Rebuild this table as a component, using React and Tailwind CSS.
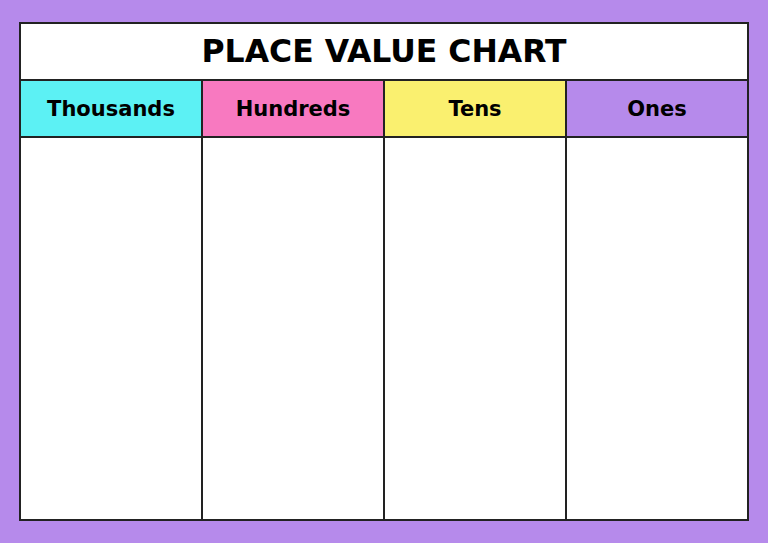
import React from 'react'

const COLUMNS = [
  { label: 'Thousands', bg: 'bg-[#5cf1f4]' },
  { label: 'Hundreds', bg: 'bg-[#f879c0]' },
  { label: 'Tens', bg: 'bg-[#faf06f]' },
  { label: 'Ones', bg: 'bg-[#b68aeb]' }
]

export default function App() {
  return (
    <div
      className="w-[768px] h-[543px] bg-[#b68aeb] px-[19px] py-[22px]"
      style={{ fontFamily: '"DejaVu Sans", "Open Sans", sans-serif' }}
    >
      <div className="h-full flex flex-col bg-white border-2 border-[#222]">
        <div className="h-[57px] flex items-center justify-center border-b-2 border-[#222]">
          <h1 className="text-[31.5px] font-bold text-black leading-none">PLACE VALUE CHART</h1>
        </div>
        <div className="flex h-[57px] border-b-2 border-[#222]">
          {COLUMNS.map((col, i) => (
            <div
              key={col.label}
              className={`flex-1 flex items-center justify-center pt-[2px] ${col.bg} ${i < 3 ? 'border-r-2 border-[#222]' : ''}`}
            >
              <span className="text-[21px] font-bold text-black">{col.label}</span>
            </div>
          ))}
        </div>
        <div className="flex flex-1">
          {COLUMNS.map((col, i) => (
            <div key={col.label} className={`flex-1 ${i < 3 ? 'border-r-2 border-[#222]' : ''}`} />
          ))}
        </div>
      </div>
    </div>
  )
}
